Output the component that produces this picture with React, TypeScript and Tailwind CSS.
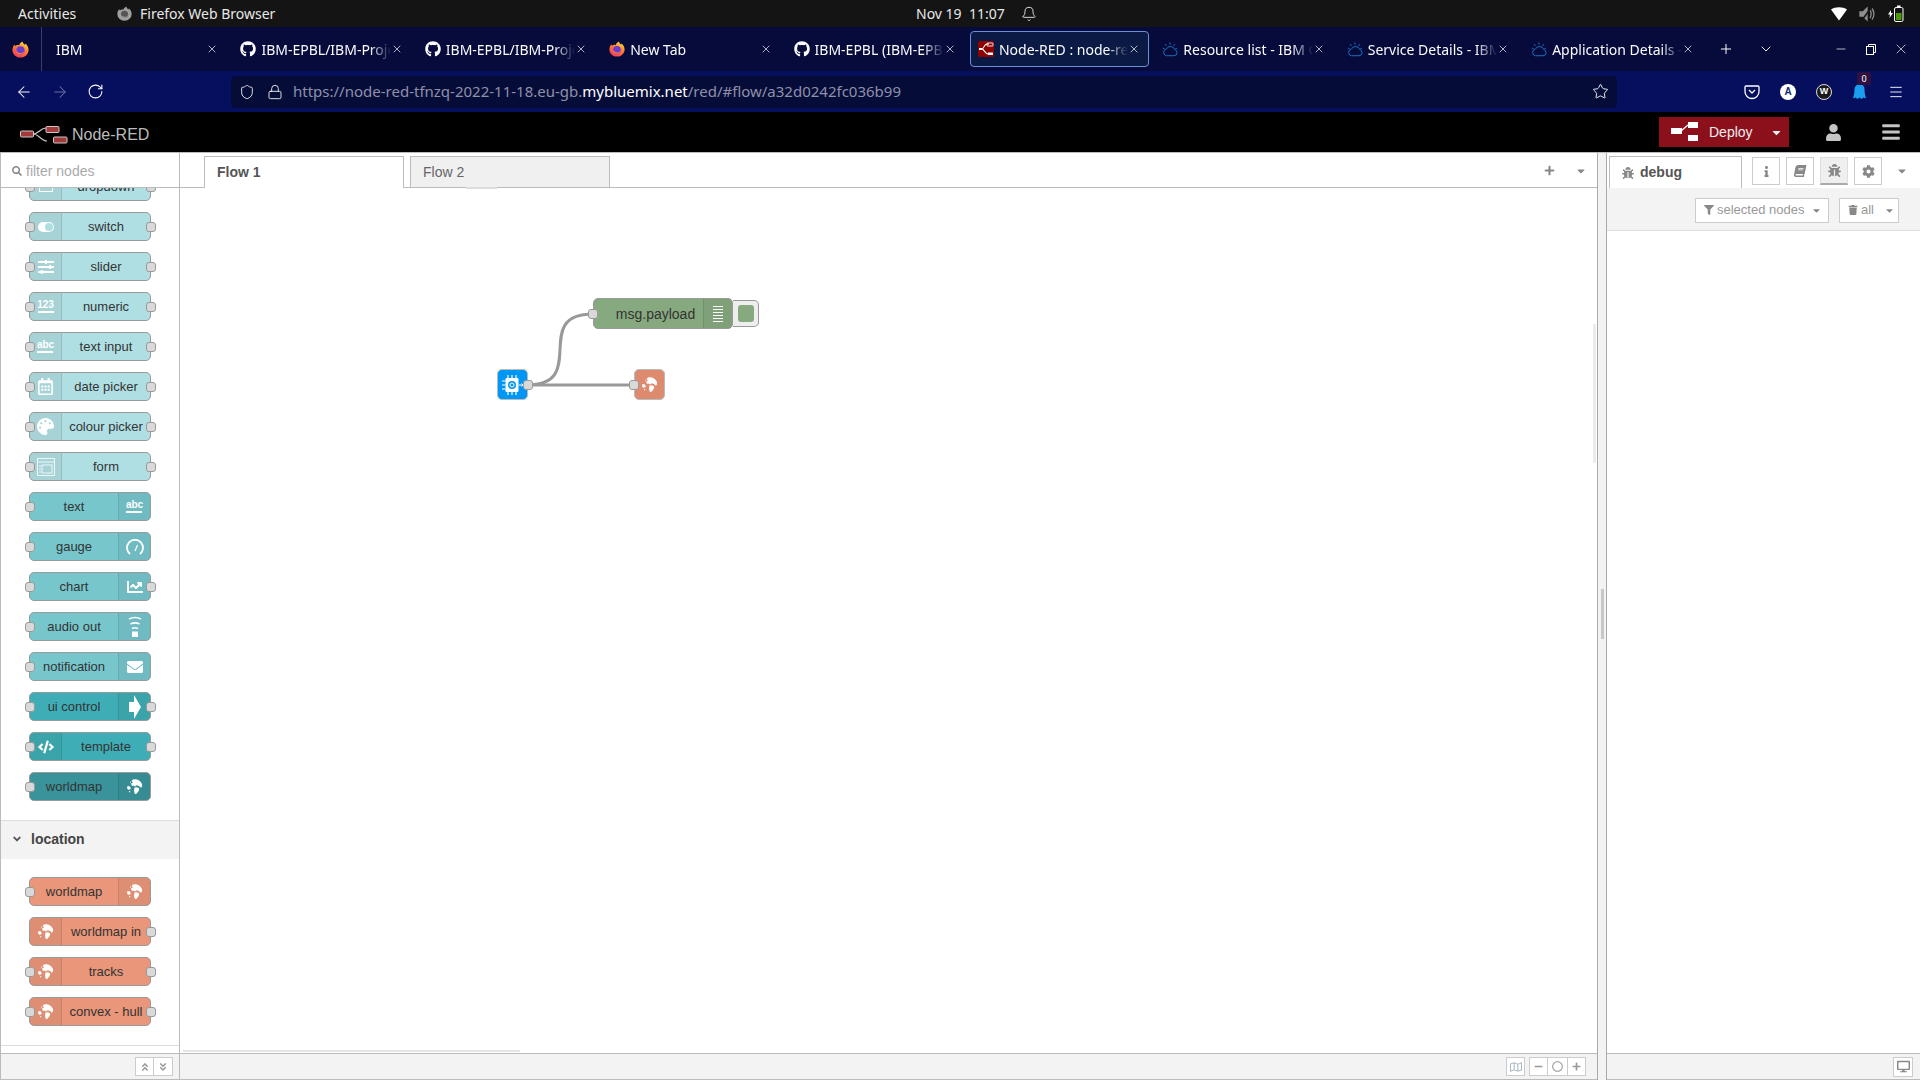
import React from "react";
import {
  FaGithub, FaSlidersH, FaRegCalendarAlt, FaPalette, FaChartLine, FaEnvelope, FaCode,
  FaBug, FaInfo, FaBook, FaCog, FaFilter, FaTrash, FaCaretDown, FaPlus, FaUser, FaBars, FaSearch,
  FaMinus, FaRegCircle, FaRegMap, FaDesktop, FaAngleDoubleUp, FaAngleDoubleDown, FaAngleDown,
} from "react-icons/fa";
import { ArrowLeft, ArrowRight, RotateCw, Shield, Lock, Star, Plus, ChevronDown, X, Minus, Menu, Bell } from "lucide-react";

const Firefox = ({ gray = false, size = 18 }: { gray?: boolean; size?: number }) => (
  <svg width={size} height={size} viewBox="0 0 20 20">
    <defs>
      <linearGradient id="ffg" x1="0.7" y1="0" x2="0.2" y2="1">
        <stop offset="0" stopColor="#ffe03a" />
        <stop offset="0.45" stopColor="#ff7a2f" />
        <stop offset="1" stopColor="#f0355f" />
      </linearGradient>
    </defs>
    <path d="M12.500 0.500c.2 2 1.500 3 3 4 .2-.6.3-1 .3-1.500C18.500 5.500 19.500 8 19.500 10.500c0 5-4.200 9-9.500 9S.500 15.500.500 10.500C.500 8 1.500 5.500 3 4c0 .8.300 1.500.8 2C5 4.500 7 4.500 8.500 5c.2-2 2-3.500 4-4.500z" fill={gray ? "#a0a0a0" : "url(#ffg)"} />
    <circle cx="10" cy="11" r="4.800" fill={gray ? "#555" : "#6b3bd6"} />
    <path d="M4.500 10c1.500 5 8 6 10.500 1.500-1 5-10 6.500-10.500-1.500z" fill={gray ? "#a0a0a0" : "#ff8a2f"} />
  </svg>
);

const IbmCloud = () => (
  <svg width="17" height="17" viewBox="0 0 18 18" fill="none" stroke="#1f70c1" strokeWidth="1.1">
    <path d="M5 16h8.500a3.500 3.500 0 0 0 .8-6.900A5 5 0 0 0 5 8.500 3.800 3.800 0 0 0 5 16z" />
    <path d="M9 1v2.500M3.500 3l1.500 2M14.500 3L13 5M1 7.500l2 .6M17 7.500l-2 .6" />
  </svg>
);

const NodeRedFav = () => (
  <svg width="16" height="16" viewBox="0 0 16 16">
    <rect width="16" height="16" rx="1.500" fill="#8f0000" />
    <path d="M1 8h3c2 0 2-5 5-5h2M4 8c2 0 3 5 6 5h2" stroke="#fff" strokeWidth="1.100" fill="none" />
    <rect x="9" y="2" width="6" height="3" rx="0.500" fill="none" stroke="#fff" strokeWidth="0.900" />
    <rect x="1" y="7" width="3" height="2" fill="#fff" />
    <rect x="10" y="11.500" width="5" height="2.500" fill="#fff" />
  </svg>
);

function BrowserTab({ icon, title, active }: { icon?: React.ReactNode; title: string; active?: boolean }) {
  return (
    <div className={`h-[36px] w-[179.4px] mr-[5px] shrink-0 flex items-center pl-[7px] pr-[8px] rounded-[4px] border ${active ? "bg-[#0a1a45] border-[#6d8fd6]" : "border-transparent"}`}>
      {icon && <span className="w-[16px] h-[16px] mr-[5px] shrink-0 flex items-center justify-center text-[#fbfbfe]">{icon}</span>}
      <span className="flex-1 min-w-0 overflow-hidden whitespace-nowrap text-[14px] text-[#fbfbfe] [mask-image:linear-gradient(to_right,#000_84%,transparent)]">{title}</span>
      <X size={12} strokeWidth={1.4} className="shrink-0 text-[#fbfbfe]" />
    </div>
  );
}

function TopBar() {
  return (
    <div className="h-[27px] bg-[#141414] flex items-center text-[#e8e8e8] text-[14px] shrink-0">
      <span className="ml-[18px] w-[99px]">Activities</span>
      <span className="w-[23px]"><Firefox gray size={15} /></span>
      <span className="w-[776px] whitespace-nowrap">Firefox Web Browser</span>
      <span className="w-[105px] whitespace-pre">Nov 19  11:07</span>
      <Bell size={16} strokeWidth={1.4} />
      <span className="ml-[794px]">
        <svg width="16" height="14" viewBox="0 0 16 14" className="block"><path d="M0 2.500C4-.5 12-.5 16 2.500L8 13.500z" fill="#fff" /></svg>
      </span>
      <span className="ml-[12px]">
        <svg width="16" height="16" viewBox="0 0 16 16" className="block" fill="none" stroke="#8f8f8f" strokeWidth="1.300"><path d="M1 6h3l4-4v12l-4-4H1z" fill="#8f8f8f" /><path d="M11 4c1.500 2 1.500 6 0 8M13 2.500c2.500 3 2.500 8 0 11" /><path d="M3 14L12 2" stroke="#141414" strokeWidth="1.500" /></svg>
      </span>
      <span className="ml-[13px]">
        <svg width="16" height="17" viewBox="0 0 16 17" className="block"><path d="M3 5L0 9.500h2L1.500 13 5 8H3z" fill="#fff" /><rect x="6.500" y="2.500" width="8.500" height="14" rx="1.500" fill="none" stroke="#fff" /><rect x="9" y="0.500" width="3.500" height="2" fill="#fff" /><rect x="8" y="8" width="5.500" height="7" fill="#4e9a06" /></svg>
      </span>
    </div>
  );
}

function TabRow() {
  const gh = <FaGithub size={16} />;
  return (
    <div className="h-[44px] bg-[#060b3b] flex items-center shrink-0 relative">
      <div className="w-[42px] self-stretch flex items-center justify-center border-r border-[#3a3e63] mr-[6px]"><Firefox size={17} /></div>
      <BrowserTab title="IBM" />
      <BrowserTab icon={gh} title="IBM-EPBL/IBM-Project-1" />
      <BrowserTab icon={gh} title="IBM-EPBL/IBM-Project-2" />
      <BrowserTab icon={<Firefox size={16} />} title="New Tab" />
      <BrowserTab icon={gh} title="IBM-EPBL (IBM-EPBL)" />
      <BrowserTab active icon={<NodeRedFav />} title="Node-RED : node-red-tfnzq" />
      <BrowserTab icon={<IbmCloud />} title="Resource list - IBM Cloud" />
      <BrowserTab icon={<IbmCloud />} title="Service Details - IBM Cloud" />
      <BrowserTab icon={<IbmCloud />} title="Application Details - IBM" />
      <Plus size={16} strokeWidth={1.5} className="text-white absolute left-[1718px]" />
      <ChevronDown size={16} strokeWidth={1.4} className="text-white absolute left-[1758px]" />
      <Minus size={14} strokeWidth={1.2} className="text-white absolute left-[1834px]" />
      <svg width="12" height="12" viewBox="0 0 12 12" fill="none" stroke="#fff" className="absolute left-[1865px]"><rect x="1.500" y="3.500" width="7" height="8" /><path d="M3.500 3.500v-2h7v8h-2" /></svg>
      <X size={16} strokeWidth={1} className="text-white absolute left-[1893px]" />
    </div>
  );
}

function NavRow() {
  return (
    <div className="h-[41px] bg-[#050f5e] flex items-center shrink-0 text-[#fbfbfe]">
      <div className="w-[231px] flex items-center pl-[15px] gap-[18px]">
        <ArrowLeft size={18} strokeWidth={1.4} />
        <ArrowRight size={18} strokeWidth={1.4} className="text-[#6d739f]" />
        <RotateCw size={17} strokeWidth={1.5} />
      </div>
      <div className="w-[1386px] h-[32px] rounded-[5px] bg-[#060c38] flex items-center">
        <Shield size={16} strokeWidth={1.3} className="ml-[8px]" />
        <Lock size={16} strokeWidth={1.3} className="ml-[12px]" />
        <span className="ml-[10px] text-[15px] text-[#8e90aa] whitespace-nowrap flex-1">https://node-red-tfnzq-2022-11-18.eu-gb.<span className="text-white">mybluemix.net</span>/red/#flow/a32d0242fc036b99</span>
        <Star size={17} strokeWidth={1.3} className="mr-[8px]" />
      </div>
      <div className="flex items-center ml-[127px] relative">
        <svg width="16" height="16" viewBox="0 0 16 16" fill="none" stroke="#fff" strokeWidth="1.300" className="block"><path d="M2 2h12a1 1 0 0 1 1 1v4.500a7 7 0 0 1-14 0V3a1 1 0 0 1 1-1z" /><path d="M5 6l3 3 3-3" /></svg>
        <span className="ml-[20px] w-[16px] h-[16px] rounded-full bg-white text-[#122a6b] text-[10px] font-bold flex items-center justify-center font-['Liberation_Sans']">A</span>
        <span className="ml-[20px] w-[16px] h-[16px] rounded-full bg-[#1a1a1a] border border-[#ddd] text-white text-[9px] font-bold flex items-center justify-center font-['Liberation_Sans']">W</span>
        <span className="ml-[21px] relative">
          <svg width="14" height="17" viewBox="0 0 14 17" className="block"><path d="M7 1a5.500 5.500 0 0 0-5.500 5.500c0 4-1 7-1.500 9l2.500-1 2 1.500 2-1.500 2 1.500 2-1.500 2.500 1c-.5-2-1.500-5-1.500-9A5.500 5.500 0 0 0 7 1z" fill="#1b9df0" /></svg>
          <span className="absolute -top-[11px] left-[4px] w-[14px] h-[13px] bg-[#2f1140] text-white text-[9px] leading-[13px] text-center rounded-[2px]">0</span>
        </span>
        <Menu size={16} strokeWidth={1.4} className="ml-[21px]" />
      </div>
    </div>
  );
}

const Logo = ({ white = false }: { white?: boolean }) => {
  const f = white ? "#fff" : "#a33a3a";
  const st = white ? "none" : "#c9c9c9";
  return (
    <svg width="48" height="18" viewBox="0 0 48 18" className="block">
      <path d="M13 8c6 0 7-6 13-6M13 8c6 0 8 7 14 7" stroke={white ? "#fff" : "#c9c9c9"} strokeWidth="1.200" fill="none" />
      <rect x="0.500" y="5" width="13" height="6" rx="1" fill={f} stroke={st} />
      <rect x="26" y="0.500" width="13" height="6" rx="1" fill={f} stroke={st} />
      <rect x="33.500" y="11" width="13.500" height="6" rx="1" fill={f} stroke={st} />
    </svg>
  );
};

function AppHeader() {
  return (
    <div className="h-[40px] bg-black flex items-center shrink-0 font-['Liberation_Sans'] relative">
      <span className="ml-[20px] mt-[5px]"><Logo /></span>
      <span className="ml-[4px] mt-[5px] text-[16px] text-[#bbbbbb]">Node-RED</span>
      <div className="ml-auto mr-[131px] h-[30px] w-[130px] bg-[#8c101c] flex items-center text-[14px] text-[#eeeeee]">
        <span className="ml-[12px]">
          <svg width="27" height="20" viewBox="0 0 27 20" className="block"><rect x="0" y="6" width="11" height="6" fill="#fff" /><rect x="17" y="0" width="10" height="6" fill="#fff" /><rect x="17" y="13" width="10" height="6" fill="#fff" /><path d="M10 9l7-6" stroke="#fff" strokeWidth="1.200" /></svg>
        </span>
        <span className="ml-[11px]">Deploy</span>
        <FaCaretDown size={13} className="ml-[17px] text-[#eee]" />
      </div>
      <FaUser size={17} className="absolute left-[1825px] text-[#c4c4c4]" />
      <FaBars size={20} className="absolute left-[1881px] text-[#c4c4c4]" />
    </div>
  );
}

const Port = ({ side }: { side: "l" | "r" }) => (
  <span className={`absolute top-[9px] w-[10px] h-[10px] rounded-[3px] bg-[#d9d9d9] border border-[#999] ${side === "l" ? "-left-[5px]" : "-right-[6px]"}`} />
);

const Txt = ({ t }: { t: string }) => (
  <span className="flex flex-col items-center text-white text-[10px] font-bold leading-[10px]"><span>{t}</span><span className="w-[16px] h-[1.500px] bg-white mt-[1px]" /></span>
);
const Switch = () => (<span className="w-[16px] h-[10px] rounded-full bg-white flex items-center justify-end pr-[1px]"><span className="w-[8px] h-[8px] rounded-full bg-[#b0dfe3]" /></span>);
const FormIco = () => (<svg width="18" height="18" viewBox="0 0 18 18" fill="none" stroke="#fff" strokeWidth="0.800"><rect x="0.500" y="0.500" width="17" height="17" /><path d="M0.500 4h17" /><rect x="5" y="7" width="10" height="8" /><path d="M2 8h2M2 11h2M2 14h2" /></svg>);
const Gauge = () => (<svg width="18" height="16" viewBox="0 0 18 16" fill="none" stroke="#fff" strokeWidth="1.800"><path d="M4 15A8 8 0 1 1 14 15" /><path d="M9 12l2.500-6" strokeWidth="1.200" /></svg>);
const Audio = () => (<svg width="16" height="22" viewBox="0 0 16 22" fill="none" stroke="#fff" strokeWidth="1.500"><path d="M2 3c4-2 8-2 12 0M3.500 8c3-1.500 6-1.500 9 0M5 12.500c2-1 4-1 6 0" /><rect x="5" y="15.500" width="6" height="5.500" fill="#fff" stroke="none" /></svg>);
const ArrowIco = () => (<svg width="12" height="24" viewBox="0 0 12 24"><path d="M0 7h5V0l7 12-7 12v-7H0z" fill="#fff" /></svg>);
const Globe = () => (
  <svg width="17" height="17" viewBox="0 0 17 17" fill="#fff">
    <path d="M7 1.500C10 .5 14.500 2 16 6c.5 2.500-.5 4-1.500 3.500L13 8l-2.500-.8L9 8.500 7.500 7.500 6 8 5 5.500 7 4.500 5.500 3z" />
    <path d="M8.500 9.500l2.500-.3 2.200 1.300-.5 2.500-2.500 3-1.500-.2-.7-3z" />
    <path d="M1.500 8l2.500.5.800 2.200-2 1.300-1.800-1.500z" />
    <path d="M3 13l1.300.2-.3 1.300-1-.5zM4.200 3.500l1 .5-1.200 1z" />
  </svg>
);
const Chip = () => (
  <svg width="22" height="20" viewBox="0 0 22 20" fill="none">
    <rect x="3.500" y="3" width="13" height="14" rx="1" fill="#fff" />
    <circle cx="10" cy="10" r="4" fill="#0096f5" />
    <circle cx="10" cy="10" r="2" fill="none" stroke="#fff" strokeWidth="1" />
    <path d="M6 0v3M10 0v3M14 0v3M6 17v3M10 17v3M14 17v3M0 6h3.500M0 10h3.500M0 14h3.500" stroke="#fff" strokeWidth="1.200" />
    <path d="M17 10h4M19.500 8.500L21 10l-1.500 1.500" stroke="#fff" strokeWidth="1" />
  </svg>
);

type N = { label: string; c: string; icon: React.ReactNode; side: "l" | "r"; ports: string };

function PNode({ label, c, icon, side, ports }: N) {
  return (
    <div className={`relative w-[122px] h-[29px] shrink-0 rounded-[5px] border border-[#999] flex ${side === "r" ? "flex-row-reverse" : ""} ${c}`}>
      <span className={`w-[32px] shrink-0 flex items-center justify-center bg-black/5 border-black/10 ${side === "l" ? "border-r rounded-l-[4px]" : "border-l rounded-r-[4px]"}`}>{icon}</span>
      <span className="flex-1 text-center text-[13px] leading-[27px] text-[#333] whitespace-nowrap">{label}</span>
      {ports.includes("l") && <Port side="l" />}
      {ports.includes("r") && <Port side="r" />}
    </div>
  );
}

const L1 = "bg-[#b0dfe3]", L2 = "bg-[#77c6cc]", L3 = "bg-[#3fadb5]", L4 = "bg-[#3a939b]", S = "bg-[#e9967a]";

const dash: N[] = [
  { label: "dropdown", c: L1, icon: <span className="w-[14px] h-[10px] border border-white" />, side: "l", ports: "lr" },
  { label: "switch", c: L1, icon: <Switch />, side: "l", ports: "lr" },
  { label: "slider", c: L1, icon: <FaSlidersH size={16} className="text-white" />, side: "l", ports: "lr" },
  { label: "numeric", c: L1, icon: <Txt t="123" />, side: "l", ports: "lr" },
  { label: "text input", c: L1, icon: <Txt t="abc" />, side: "l", ports: "lr" },
  { label: "date picker", c: L1, icon: <FaRegCalendarAlt size={17} className="text-white" />, side: "l", ports: "lr" },
  { label: "colour picker", c: L1, icon: <FaPalette size={17} className="text-white" />, side: "l", ports: "lr" },
  { label: "form", c: L1, icon: <FormIco />, side: "l", ports: "lr" },
  { label: "text", c: L2, icon: <Txt t="abc" />, side: "r", ports: "l" },
  { label: "gauge", c: L2, icon: <Gauge />, side: "r", ports: "l" },
  { label: "chart", c: L2, icon: <FaChartLine size={16} className="text-white" />, side: "r", ports: "lr" },
  { label: "audio out", c: L2, icon: <Audio />, side: "r", ports: "l" },
  { label: "notification", c: L2, icon: <FaEnvelope size={16} className="text-white" />, side: "r", ports: "l" },
  { label: "ui control", c: L3, icon: <ArrowIco />, side: "r", ports: "lr" },
  { label: "template", c: L3, icon: <FaCode size={16} className="text-white" />, side: "l", ports: "lr" },
  { label: "worldmap", c: L4, icon: <Globe />, side: "r", ports: "l" },
];
const loc: N[] = [
  { label: "worldmap", c: S, icon: <Globe />, side: "r", ports: "l" },
  { label: "worldmap in", c: S, icon: <Globe />, side: "l", ports: "r" },
  { label: "tracks", c: S, icon: <Globe />, side: "l", ports: "lr" },
  { label: "convex - hull", c: S, icon: <Globe />, side: "l", ports: "lr" },
];

function Palette() {
  return (
    <div className="w-[180px] shrink-0 flex flex-col border-x border-[#bbb] bg-white">
      <div className="h-[35px] shrink-0 border-b border-[#bbb] flex items-center pl-[11px] pt-[2px] bg-white z-10 text-[14px] text-[#aaa]">
        <FaSearch size={10} className="text-[#888] mr-[4px]" />
        filter nodes
      </div>
      <div className="flex-1 min-h-0 overflow-hidden">
        <div className="flex flex-col gap-[11px] pl-[28px] -mt-[16px]">
          {dash.map((n) => <PNode key={n.label} {...n} />)}
        </div>
        <div className="mt-[19px] h-[39px] bg-[#f3f3f3] border-t border-[#ddd] flex items-center pb-[2px] text-[14px] font-bold text-[#444]">
          <FaAngleDown size={12} className="ml-[10px] text-[#555] mr-[8px]" />
          location
        </div>
        <div className="flex flex-col gap-[11px] pl-[28px] mt-[18px]">
          {loc.map((n) => <PNode key={n.label + n.side} {...n} />)}
        </div>
        <div className="mt-[19px] border-t border-[#ddd]" />
      </div>
      <div className="h-[27px] shrink-0 bg-[#f3f3f3] border-y border-[#bbb] flex items-center justify-end pr-[6px]">
        <span className="w-[19px] h-[19px] bg-white border border-[#ccc] flex items-center justify-center text-[#999]"><FaAngleDoubleUp size={10} /></span>
        <span className="w-[19px] h-[19px] bg-white border border-l-0 border-[#ccc] flex items-center justify-center text-[#999]"><FaAngleDoubleDown size={10} /></span>
      </div>
    </div>
  );
}

function Canvas() {
  return (
    <div className="flex-1 min-h-0 relative bg-white">
      <span className="absolute left-[286px] -top-[1px] w-[31px] h-[2px] bg-[#ddd]" />
      <svg width="300" height="140" viewBox="0 0 300 140" fill="none" className="absolute left-[300px] top-[92px]">
        <path d="M47 105C110 105 50 34 113 34" stroke="#999" strokeWidth="3" />
        <path d="M47 105H155" stroke="#999" strokeWidth="3" />
      </svg>
      <div className="absolute left-[413px] top-[110px] w-[140px] h-[31px] rounded-[5px] bg-[#87a980] border border-[#999] flex">
        <span className="flex-1 text-center text-[14px] leading-[31px] text-[#333] pl-[14px]">msg.payload</span>
        <span className="w-[29px] rounded-r-[4px] bg-black/5 border-l border-black/10 flex flex-col items-center justify-center gap-[2px]">
          {[0, 1, 2, 3, 4, 5].map((i) => <span key={i} className="w-[10px] h-[1px] bg-white" />)}
        </span>
        <span className="absolute -left-[6px] top-[10px] w-[10px] h-[10px] rounded-[3px] bg-[#d9d9d9] border border-[#999]" />
      </div>
      <div className="absolute left-[553px] top-[112px] w-[26px] h-[27px] rounded-r-[5px] bg-[#eee] border border-[#999] border-l-0 flex items-center justify-center">
        <span className="w-[16px] h-[17px] rounded-[3px] bg-[#87a980]" />
      </div>
      <div className="absolute left-[317px] top-[181px] w-[31px] h-[31px] rounded-[5px] bg-[#0096f5] border border-[#bbb] flex items-center justify-center">
        <Chip />
        <span className="absolute -right-[6px] top-[10px] w-[10px] h-[10px] rounded-[3px] bg-[#d9d9d9] border border-[#999]" />
      </div>
      <div className="absolute left-[454px] top-[181px] w-[31px] h-[31px] rounded-[5px] bg-[#dd8a6e] border border-[#bbb] flex items-center justify-center">
        <Globe />
        <span className="absolute -left-[6px] top-[10px] w-[10px] h-[10px] rounded-[3px] bg-[#d9d9d9] border border-[#999]" />
      </div>
      <span className="absolute left-[1413px] top-[136px] w-[3px] h-[139px] bg-[#ececec]" />
      <span className="absolute left-[3px] bottom-[1px] w-[337px] h-[2px] bg-[#e4e4e4]" />
    </div>
  );
}

function Workspace() {
  return (
    <div className="flex-1 min-w-0 flex flex-col border-r border-[#aaa]">
      <div className="h-[35px] shrink-0 border-b border-[#bbb] flex items-end pl-[24px] relative bg-white">
        <div className="w-[200px] h-[32px] -mb-[1px] bg-white border border-b-0 border-[#bbb] pl-[12px] text-[14px] font-bold text-[#555] leading-[30px]">Flow 1</div>
        <div className="w-[200px] h-[31px] ml-[6px] bg-[#f0f0f0] border border-b-0 border-[#bbb] pl-[12px] text-[14px] text-[#666] leading-[31px]">Flow 2</div>
        <FaPlus size={11} className="absolute left-[1364px] top-[12px] text-[#888]" />
        <FaCaretDown size={12} className="absolute left-[1395px] top-[12px] text-[#888]" />
      </div>
      <Canvas />
      <div className="h-[27px] shrink-0 bg-[#f3f3f3] border-y border-[#bbb] flex items-center justify-end pr-[11px] text-[#999]">
        <span className="w-[19px] h-[19px] bg-white border border-[#ccc] flex items-center justify-center mr-[4px]"><FaRegMap size={12} className="text-[#a9b6c4]" /></span>
        <span className="w-[19px] h-[19px] bg-white border border-[#ccc] flex items-center justify-center"><FaMinus size={9} /></span>
        <span className="w-[19px] h-[19px] bg-white border border-x-0 border-[#ccc] flex items-center justify-center"><FaRegCircle size={11} /></span>
        <span className="w-[19px] h-[19px] bg-white border border-[#ccc] flex items-center justify-center"><FaPlus size={9} /></span>
      </div>
    </div>
  );
}

function Btn({ children, sel }: { children: React.ReactNode; sel?: boolean }) {
  return <span className={`w-[28px] h-[28px] mr-[6px] border flex items-center justify-center text-[#888] ${sel ? "bg-[#efefef] border-[#ddd] border-b-[2px] border-b-[#aaa]" : "bg-white border-[#ccc]"}`}>{children}</span>;
}

function Sidebar() {
  return (
    <div className="w-[314px] shrink-0 flex flex-col border-l border-[#aaa] bg-white">
      <div className="h-[35px] shrink-0 flex items-start pt-[3px] pl-[2px] bg-white">
        <div className="w-[133px] h-[32px] bg-white border border-b-0 border-[#bbb] flex items-center pl-[12px] text-[14px] font-bold text-[#555]">
          <FaBug size={12} className="text-[#888] mr-[6px]" />debug
        </div>
        <div className="flex ml-[10px] pt-[1px]">
          <Btn><FaInfo size={11} /></Btn>
          <Btn><FaBook size={12} className="-skew-x-12" /></Btn>
          <Btn sel><FaBug size={13} /></Btn>
          <Btn><FaCog size={13} /></Btn>
          <FaCaretDown size={12} className="text-[#888] ml-[8px] mt-[8px]" />
        </div>
      </div>
      <div className="h-[43px] shrink-0 bg-[#f3f3f3] border-b border-[#ddd] flex items-center justify-end pr-[21px] pt-[2px] text-[13px] text-[#999]">
        <span className="h-[25px] w-[134px] bg-white border border-[#ccc] flex items-center pl-[8px]">
          <FaFilter size={10} className="text-[#888] mr-[3px]" />selected nodes<FaCaretDown size={11} className="ml-[7px] text-[#888]" />
        </span>
        <span className="h-[25px] w-[60px] ml-[10px] bg-white border border-[#ccc] flex items-center pl-[8px]">
          <FaTrash size={10} className="text-[#888] mr-[3px]" />all<FaCaretDown size={11} className="ml-[10px] text-[#888]" />
        </span>
      </div>
      <div className="flex-1" />
      <div className="h-[27px] shrink-0 bg-[#f3f3f3] border-y border-[#bbb] flex items-center justify-end pr-[7px]">
        <span className="w-[20px] h-[20px] bg-white border border-[#ccc] flex items-center justify-center"><FaDesktop size={13} className="text-[#888]" /></span>
      </div>
    </div>
  );
}

export default function App() {
  return (
    <div className="w-[1920px] h-[1080px] overflow-hidden flex flex-col bg-white font-['Noto_Sans',sans-serif]">
      <TopBar />
      <TabRow />
      <NavRow />
      <AppHeader />
      <div className="flex-1 min-h-0 flex border-t border-[#bbb] font-['Liberation_Sans',sans-serif]">
        <Palette />
        <Workspace />
        <div className="w-[8px] shrink-0 bg-[#f3f3f3] flex items-start justify-center"><span className="w-[3px] h-[50px] bg-[#c8c8c8] mt-[436px]" /></div>
        <Sidebar />
      </div>
    </div>
  );
}
